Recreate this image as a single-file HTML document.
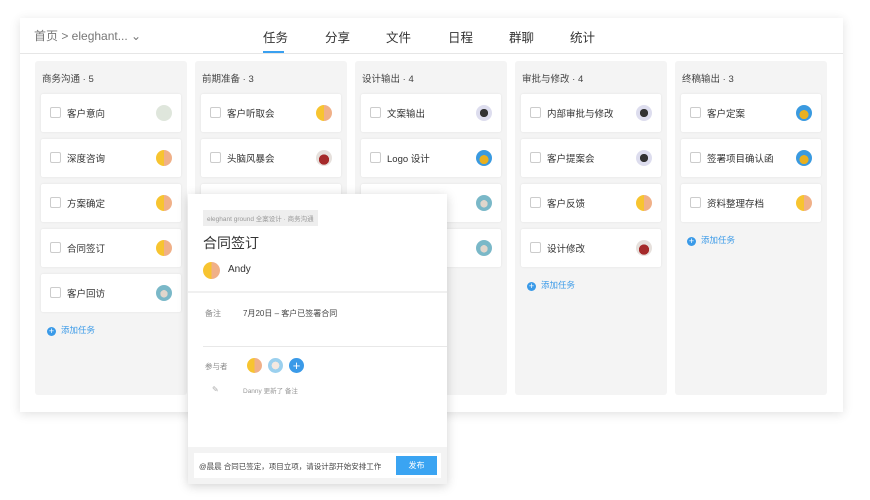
<!DOCTYPE html>
<html><head><meta charset="utf-8"><style>
*{margin:0;padding:0;box-sizing:border-box}
body{width:870px;height:500px;background:#fff;font-family:"Liberation Sans","Noto Sans CJK SC",sans-serif;position:relative;overflow:hidden;color:#333}
.main{position:absolute;left:20px;top:18px;width:823px;height:394px;background:#fff;box-shadow:0 2px 10px rgba(0,0,0,.12)}
.hdr{position:absolute;left:0;top:0;width:823px;height:36px;border-bottom:1px solid #e6e6e6}
.bc{position:absolute;left:14px;top:9px;font-size:12px;color:#777}
.tab{position:absolute;top:9px;font-size:12.5px;color:#333}
.ul{position:absolute;left:243px;top:33px;width:21px;height:2px;background:#3aa0f0}
.col{position:absolute;top:43px;width:152px;height:334px;background:#f4f4f4;border-radius:3px}
.ct{position:absolute;left:7px;top:10px;font-size:9.5px;color:#444}
.card{position:absolute;left:6px;width:140px;height:38px;background:#fff;border-radius:2px;box-shadow:0 0 2px rgba(0,0,0,.08)}
.cb{position:absolute;left:9px;top:13px;width:11px;height:11px;border:1px solid #ccc;border-radius:2px}
.cl{position:absolute;left:26px;top:12px;font-size:9.5px;color:#333}
.av{position:absolute;right:9px;top:11px;width:16px;height:16px;border-radius:50%}
.y{background:linear-gradient(90deg,#f7c430 50%,#f0b088 50%)}
.g{background:#dfe6dc}.r{background:radial-gradient(circle at 50% 60%,#a52a2a 40%,#e6e0dc 42%)}
.d{background:radial-gradient(circle at 50% 50%,#333 35%,#dde 37%)}
.b{background:radial-gradient(circle at 50% 60%,#e8b020 35%,#3a9ae0 37%)}
.t{background:radial-gradient(circle at 50% 55%,#e0d6cc 30%,#7ab8c8 32%)}
.add{position:absolute;left:12px;font-size:8.5px;color:#3a9ae8}
.add i{display:inline-block;width:9px;height:9px;border-radius:50%;background:#3a9ae8;color:#fff;font-style:normal;font-size:9px;line-height:9px;text-align:center;margin-right:5px;vertical-align:-1px}
.pop{position:absolute;left:188px;top:194px;width:259px;height:290px;background:#fff;box-shadow:0 2px 10px rgba(0,0,0,.18)}
</style></head><body>
<div class="main">
<div class="hdr">
<div class="bc">首页 &gt; eleghant... ⌄</div>
<div class="tab" style="left:243px">任务</div><div class="tab" style="left:305px">分享</div><div class="tab" style="left:366px">文件</div><div class="tab" style="left:428px">日程</div><div class="tab" style="left:489px">群聊</div><div class="tab" style="left:550px">统计</div>
<div class="ul"></div>
</div>
<div class="col" style="left:15px"><div class="ct">商务沟通 · 5</div>
<div class="card" style="top:33px"><div class="cb"></div><div class="cl">客户意向</div><div class="av g"></div></div>
<div class="card" style="top:78px"><div class="cb"></div><div class="cl">深度咨询</div><div class="av y"></div></div>
<div class="card" style="top:123px"><div class="cb"></div><div class="cl">方案确定</div><div class="av y"></div></div>
<div class="card" style="top:168px"><div class="cb"></div><div class="cl">合同签订</div><div class="av y"></div></div>
<div class="card" style="top:213px"><div class="cb"></div><div class="cl">客户回访</div><div class="av t"></div></div>
<div class="add" style="top:263px"><i>+</i>添加任务</div></div>
<div class="col" style="left:175px"><div class="ct">前期准备 · 3</div>
<div class="card" style="top:33px"><div class="cb"></div><div class="cl">客户听取会</div><div class="av y"></div></div>
<div class="card" style="top:78px"><div class="cb"></div><div class="cl">头脑风暴会</div><div class="av r"></div></div>
<div class="card" style="top:123px"></div></div>
<div class="col" style="left:335px"><div class="ct">设计输出 · 4</div>
<div class="card" style="top:33px"><div class="cb"></div><div class="cl">文案输出</div><div class="av d"></div></div>
<div class="card" style="top:78px"><div class="cb"></div><div class="cl">Logo 设计</div><div class="av b"></div></div>
<div class="card" style="top:123px"><div class="av t"></div></div>
<div class="card" style="top:168px"><div class="av t"></div></div></div>
<div class="col" style="left:495px"><div class="ct">审批与修改 · 4</div>
<div class="card" style="top:33px"><div class="cb"></div><div class="cl">内部审批与修改</div><div class="av d"></div></div>
<div class="card" style="top:78px"><div class="cb"></div><div class="cl">客户提案会</div><div class="av d"></div></div>
<div class="card" style="top:123px"><div class="cb"></div><div class="cl">客户反馈</div><div class="av y"></div></div>
<div class="card" style="top:168px"><div class="cb"></div><div class="cl">设计修改</div><div class="av r"></div></div>
<div class="add" style="top:218px"><i>+</i>添加任务</div></div>
<div class="col" style="left:655px"><div class="ct">终稿输出 · 3</div>
<div class="card" style="top:33px"><div class="cb"></div><div class="cl">客户定案</div><div class="av b"></div></div>
<div class="card" style="top:78px"><div class="cb"></div><div class="cl">签署项目确认函</div><div class="av b"></div></div>
<div class="card" style="top:123px"><div class="cb"></div><div class="cl">资料整理存档</div><div class="av y"></div></div>
<div class="add" style="top:173px"><i>+</i>添加任务</div></div>
</div>
<div class="pop">
<div style="position:absolute;left:15px;top:16px;background:#eee;color:#999;font-size:6.5px;padding:3px 4px">eleghant ground 全案设计 · 商务沟通</div>
<div style="position:absolute;left:15px;top:39px;font-size:14px;color:#333">合同签订</div>
<div style="position:absolute;left:15px;top:68px;width:17px;height:17px;border-radius:50%" class="y"></div>
<div style="position:absolute;left:40px;top:70px;font-size:10px;color:#333">Andy</div>
<div style="position:absolute;left:0;top:97px;width:259px;height:2px;background:#f0f0f0"></div>
<div style="position:absolute;left:17px;top:114px;font-size:8px;color:#888">备注</div>
<div style="position:absolute;left:55px;top:114px;font-size:8px;color:#444">7月20日 – 客户已签署合同</div>
<div style="position:absolute;left:15px;top:152px;width:244px;height:1px;background:#e8e8e8"></div>
<div style="position:absolute;left:17px;top:167px;font-size:7.5px;color:#888">参与者</div>
<div style="position:absolute;left:59px;top:164px;width:15px;height:15px;border-radius:50%" class="y"></div>
<div style="position:absolute;left:80px;top:164px;width:15px;height:15px;border-radius:50%;background:radial-gradient(circle at 50% 50%,#f4e8e0 35%,#9bd0ee 37%)"></div>
<div style="position:absolute;left:101px;top:164px;width:15px;height:15px;border-radius:50%;background:#3a9ae8;color:#fff;font-size:13px;line-height:15px;text-align:center">+</div>
<div style="position:absolute;left:24px;top:191px;font-size:8px;color:#aaa">✎</div>
<div style="position:absolute;left:55px;top:191px;font-size:6.5px;color:#999">Danny 更新了 备注</div>
<div style="position:absolute;left:0;top:253px;width:259px;height:37px;background:#f3f3f3">
<div style="position:absolute;left:6px;top:6px;width:247px;height:25px;background:#fff">
<div style="position:absolute;left:5px;top:8px;font-size:7.5px;color:#444">@晨晨 合同已签定，项目立项，请设计部开始安排工作</div>
<div style="position:absolute;left:202px;top:3px;width:41px;height:19px;background:#3aa4f2;color:#fff;font-size:8px;text-align:center;line-height:19px">发布</div>
</div></div>
</div>
</body></html>
